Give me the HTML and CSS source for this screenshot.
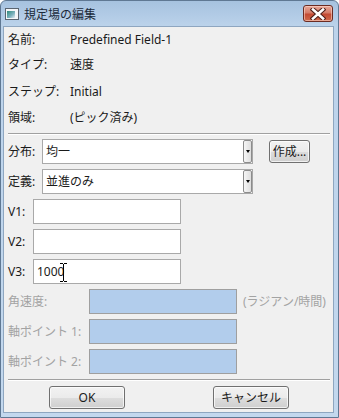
FILE: index.html
```html
<!DOCTYPE html>
<html lang="ja">
<head>
<meta charset="utf-8">
<title>規定場の編集</title>
<link rel="stylesheet" href="styles.css">
</head>
<body>
<div class="window">
  <div class="titlebar">
    <svg class="app-icon" width="14" height="12" viewBox="0 0 14 12">
      <defs>
        <linearGradient id="ig" x1="0" y1="0" x2="1" y2="1">
          <stop offset="0" stop-color="#2f8a7a"/>
          <stop offset="0.6" stop-color="#7fb3c0"/>
          <stop offset="1" stop-color="#e8eef2"/>
        </linearGradient>
      </defs>
      <rect x="0.5" y="0.5" width="13" height="11" fill="#f4f6f8" stroke="#5a6570"/>
      <rect x="2" y="3" width="8" height="7" fill="url(#ig)"/>
    </svg>
    <span class="title">規定場の編集</span>
    <div class="close">
      <svg width="16" height="12" viewBox="0 0 16 12">
        <path d="M3 1.5 L13 10.5 M13 1.5 L3 10.5" stroke="#4b1e18" stroke-width="4.6" stroke-linecap="square"/>
        <path d="M3 1.5 L13 10.5 M13 1.5 L3 10.5" stroke="#ffffff" stroke-width="2.6" stroke-linecap="square"/>
      </svg>
    </div>
  </div>
  <div class="panel">
    <div class="info">
      <span>名前:</span><span>Predefined Field-1</span>
      <span>タイプ:</span><span>速度</span>
      <span>ステップ:</span><span>Initial</span>
      <span>領域:</span><span>(ピック済み)</span>
    </div>
    <div class="sep"></div>
    <div class="form">
      <div class="row">
        <span class="lbl lbl-combo">分布:</span>
        <div class="combo"><span class="combo-text">均一</span><span class="drop"><span class="arrow"></span></span></div>
        <button class="btn btn-create">作成...</button>
      </div>
      <div class="row">
        <span class="lbl lbl-combo">定義:</span>
        <div class="combo"><span class="combo-text">並進のみ</span><span class="drop"><span class="arrow"></span></span></div>
      </div>
      <div class="row">
        <span class="lbl lbl-v">V1:</span>
        <div class="field"></div>
      </div>
      <div class="row">
        <span class="lbl lbl-v">V2:</span>
        <div class="field"></div>
      </div>
      <div class="row">
        <span class="lbl lbl-v">V3:</span>
        <div class="field field-v3">1000
          <svg class="ibeam" width="7" height="19" viewBox="0 0 7 19">
            <path d="M0 0.5 H3 M4 0.5 H7 M3.5 1 V18 M0 18.5 H3 M4 18.5 H7" stroke="#000" stroke-width="1"/>
          </svg>
        </div>
      </div>
      <div class="row disabled">
        <span class="lbl lbl-axis">角速度:</span>
        <div class="field field-off"></div>
        <span class="unit">(ラジアン/時間)</span>
      </div>
      <div class="row disabled">
        <span class="lbl lbl-axis">軸ポイント 1:</span>
        <div class="field field-off"></div>
      </div>
      <div class="row disabled">
        <span class="lbl lbl-axis">軸ポイント 2:</span>
        <div class="field field-off"></div>
      </div>
    </div>
    <div class="sep sep-bottom"></div>
    <div class="actions">
      <button class="btn btn-action">OK</button>
      <button class="btn btn-action">キャンセル</button>
    </div>
  </div>
</div>
</body>
</html>
```

FILE: styles.css
```css
* { box-sizing: border-box; }

html, body {
  margin: 0;
  padding: 0;
  background: #ffffff;
}

body {
  font-family: "Noto Sans", "Noto Sans CJK JP", sans-serif;
  font-size: 12px;
  color: #1a1a1a;
}

.window {
  width: 339px;
  height: 418px;
  display: flex;
  flex-direction: column;
  border: 1px solid #5f7893;
  border-radius: 6px 6px 0 0;
  padding: 0 4px 4px 2px;
  background: linear-gradient(#a6c2df 0, #bcd3eb 26px, #c3d8ee 100%);
}

.titlebar {
  height: 25px;
  display: flex;
  align-items: center;
  padding-left: 2px;
}

.app-icon {
  display: block;
  margin-top: 1px;
}

.title {
  margin-left: 5px;
  font-family: "Noto Sans CJK JP", sans-serif;
  font-size: 12px;
  line-height: 14px;
  color: #1b2a3a;
}

.close {
  margin-left: auto;
  margin-right: 1px;
  align-self: flex-start;
  margin-top: 4px;
  width: 30px;
  height: 17px;
  border: 1px solid #6b2b22;
  border-radius: 3px;
  background: linear-gradient(#e8a898 0, #d47b68 45%, #c44a33 55%, #cf6a4c 100%);
  box-shadow: inset 0 0 0 1px rgba(255, 220, 210, 0.55);
  display: flex;
  align-items: center;
  justify-content: center;
}

.close svg { display: block; }

.panel {
  flex: 1;
  background: #f0f0f0;
  border: 1px solid #8ea6c0;
  padding: 0 3px 0 4px;
  display: flex;
  flex-direction: column;
}

.info {
  display: grid;
  grid-template-columns: 62px auto;
  grid-template-rows: 25px 26px 27px 26px;
  align-items: center;
  line-height: 16px;
}

.sep {
  height: 2px;
  margin-top: 2px;
  border-top: 1px solid #a0a0a0;
  border-bottom: 1px solid #ffffff;
}

.form {
  margin-top: 4px;
  display: flex;
  flex-direction: column;
  gap: 5px;
}

.row {
  height: 25px;
  display: flex;
  align-items: center;
}

.lbl {
  flex: none;
  line-height: 16px;
}

.lbl-combo { width: 34px; }
.lbl-v { width: 25px; }
.lbl-axis { width: 81px; }

.disabled .lbl,
.disabled .unit {
  color: #a3a3a3;
}

.combo {
  width: 211px;
  height: 25px;
  background: #ffffff;
  border: 1px solid #a9a9a9;
  padding: 1px 0 1px 3px;
  display: flex;
  align-items: center;
}

.combo-text {
  flex: 1;
  line-height: 16px;
}

.drop {
  width: 9px;
  height: 23px;
  margin-right: 0;
  border: 1px solid #8c8c8c;
  border-radius: 2px;
  background: linear-gradient(90deg, #f6f6f6, #dedede);
  position: relative;
}

.arrow {
  position: absolute;
  left: 2px;
  top: 9px;
  width: 0;
  height: 0;
  border-left: 2.5px solid transparent;
  border-right: 2.5px solid transparent;
  border-top: 3px solid #000;
}

.btn {
  font-family: "Noto Sans", "Noto Sans CJK JP", sans-serif;
  font-size: 12px;
  color: #1a1a1a;
  border: 1px solid #707070;
  border-radius: 3px;
  background: linear-gradient(#f2f2f2 0, #ebebeb 50%, #dddddd 51%, #cfcfcf 100%);
  box-shadow: inset 0 0 0 1px rgba(255, 255, 255, 0.7);
  padding: 0;
  line-height: 16px;
}

.btn-create {
  width: 41px;
  height: 23px;
  margin-left: 16px;
}

.field {
  width: 148px;
  height: 25px;
  background: #ffffff;
  border: 1px solid #a9a9a9;
  padding: 0 3px;
  line-height: 23px;
  position: relative;
}

.field-off {
  background: #b2cdec;
  border-color: #9f9f9f;
}

.ibeam {
  position: absolute;
  left: 26px;
  top: 3px;
}

.unit {
  margin-left: 6px;
  line-height: 16px;
}

.sep-bottom {
  margin-top: 5px;
}

.actions {
  margin-top: 5px;
  display: flex;
  gap: 88px;
  padding-left: 41px;
}

.btn-action {
  width: 76px;
  height: 23px;
}
```
